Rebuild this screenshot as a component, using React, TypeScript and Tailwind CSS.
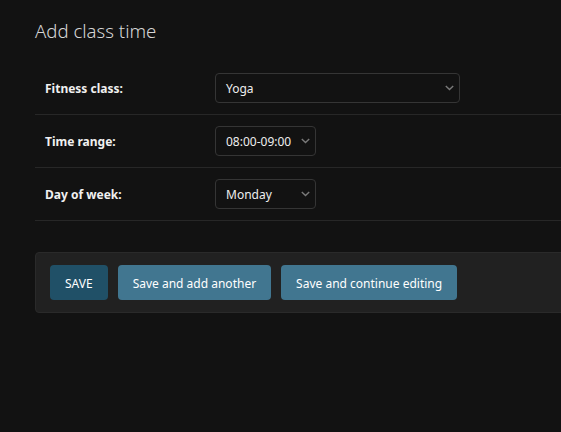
import React from 'react';

const rows = [
  { label: 'Fitness class:', value: 'Yoga', width: 'w-[245px]' },
  { label: 'Time range:', value: '08:00-09:00', width: 'w-[101px]' },
  { label: 'Day of week:', value: 'Monday', width: 'w-[101px]' },
];

function Chevron() {
  return (
    <svg width="9" height="6" viewBox="0 0 9 6" className="shrink-0">
      <path d="M0.8 1 L4.5 4.6 L8.2 1" fill="none" stroke="#7a7a7a" strokeWidth="1.4" />
    </svg>
  );
}

function FakeSelect({ value, width }: { value: string; width: string }) {
  return (
    <div
      className={`${width} h-[30px] flex items-center justify-between pl-[10px] pr-[5px] rounded-[4px] border border-[#353535] bg-[#121212] text-[12px] text-[#eeeeee]`}
    >
      <span className="pt-[2px]">{value}</span>
      <Chevron />
    </div>
  );
}

export default function App() {
  return (
    <div
      className="min-h-screen w-full overflow-hidden bg-[#121212] text-[#eeeeee]"
      style={{ fontFamily: '"Noto Sans", "Open Sans", sans-serif' }}
    >
      <div className="w-[640px] pl-[35px] pt-[18px]">
        <h1 className="text-[18.6px] leading-[26px] font-light text-[#d6d6d6] mb-[18px]">Add class time</h1>

        {/* form fields */}
        <div>
          {rows.map((r) => (
            <div key={r.label} className="flex items-center py-[11px] px-[10px] border-b border-[#272727]">
              <div className="w-[170px] pt-[2px] text-[12px] font-bold text-[#f0f0f0]">{r.label}</div>
              <FakeSelect value={r.value} width={r.width} />
            </div>
          ))}
        </div>

        {/* submit row */}
        <div className="mt-[31px] flex gap-[10px] px-[14px] py-[12px] bg-[#212121] border border-[#2a2a2a] rounded-[4px]">
          <button className="h-[35px] px-[15px] pt-[2px] rounded-[4px] bg-[#205067] text-[12px] text-white">SAVE</button>
          <button className="h-[35px] px-[15px] pt-[2px] rounded-[4px] bg-[#417690] text-[12px] text-white">Save and add another</button>
          <button className="h-[35px] px-[15px] pt-[2px] rounded-[4px] bg-[#417690] text-[12px] text-white">Save and continue editing</button>
        </div>
      </div>
    </div>
  );
}
